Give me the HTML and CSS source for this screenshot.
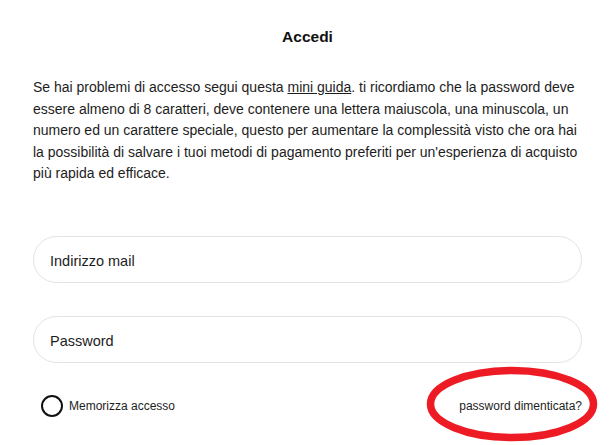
FILE: index.html
```html
<!DOCTYPE html>
<html lang="it">
<head>
<meta charset="utf-8">
<title>Accedi</title>
<link rel="stylesheet" href="styles.css">
</head>
<body>
<main class="page">
  <h1 class="title">Accedi</h1>
  <p class="intro">Se hai problemi di accesso segui questa <a class="guide-link" href="#">mini guida</a>. ti ricordiamo che la password deve essere almeno di 8 caratteri, deve contenere una lettera maiuscola, una minuscola, un numero ed un carattere speciale, questo per aumentare la complessità visto che ora hai la possibilità di salvare i tuoi metodi di pagamento preferiti per un'esperienza di acquisto più rapida ed efficace.</p>
  <form class="login-form">
    <input class="field" type="email" placeholder="Indirizzo mail">
    <input class="field" type="password" placeholder="Password">
    <div class="options">
      <label class="remember"><span class="radio"></span>Memorizza accesso</label>
      <a class="forgot" href="#">password dimenticata?
        <svg class="highlight" width="180" height="82" viewBox="0 0 180 82" aria-hidden="true">
          <ellipse cx="89" cy="40" rx="81.5" ry="33.5" fill="none" stroke="#ed1c24" stroke-width="7.5"/>
        </svg>
      </a>
    </div>
  </form>
</main>
</body>
</html>
```

FILE: styles.css
```css
* { box-sizing: border-box; }

html, body {
  margin: 0;
  padding: 0;
  background: #ffffff;
}

body {
  font-family: "Liberation Sans", Arial, sans-serif;
  color: #1d1d1d;
}

.page {
  width: 613px;
  min-height: 445px;
  padding: 27px 31px 0 33px;
}

.title {
  margin: 0;
  font-size: 15.5px;
  line-height: 20px;
  font-weight: bold;
  text-align: center;
  color: #111;
}

.intro {
  margin: 30px 0 0 0;
  font-size: 14px;
  line-height: 21.5px;
  color: #1d1d1d;
}

.guide-link {
  color: inherit;
  text-decoration: underline;
}

.login-form {
  margin-top: 51px;
  display: flex;
  flex-direction: column;
  gap: 33px;
}

.field {
  display: block;
  width: 549px;
  height: 47px;
  margin: 0;
  padding: 3px 16px 0 16px;
  border: 1px solid #e3e3e3;
  border-radius: 24px;
  background: #fff;
  font-family: "Liberation Sans", Arial, sans-serif;
  font-size: 14.5px;
  color: #1d1d1d;
  outline: none;
}

.field::placeholder {
  color: #1d1d1d;
  opacity: 1;
}

.options {
  margin-top: -1px;
  height: 22px;
  display: flex;
  align-items: center;
  justify-content: space-between;
  padding-left: 8px;
  font-size: 12px;
}

.remember {
  display: flex;
  align-items: center;
  gap: 6px;
  color: #1d1d1d;
}

.radio {
  width: 22px;
  height: 22px;
  border: 2px solid #111;
  border-radius: 50%;
}

.forgot {
  position: relative;
  color: #1d1d1d;
  text-decoration: none;
}

.highlight {
  position: absolute;
  left: -36px;
  top: -35px;
}
```
